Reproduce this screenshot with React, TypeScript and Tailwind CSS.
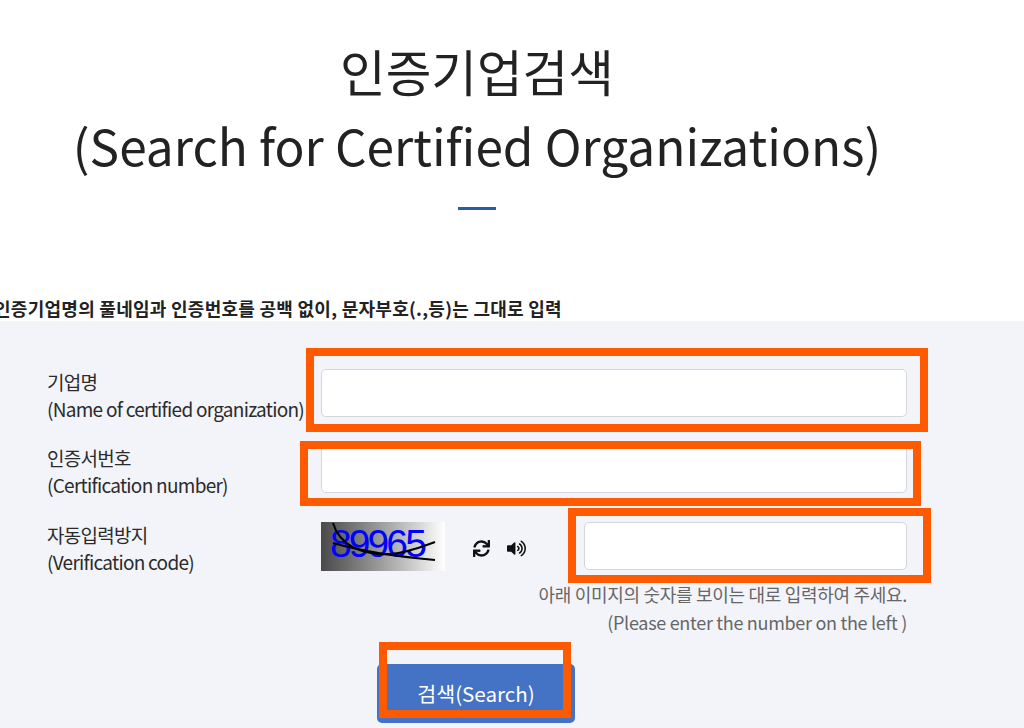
import {FaSync, FaVolumeUp} from "react-icons/fa";

const font = {fontFamily: '"Noto Sans CJK KR", "Noto Sans", sans-serif'};

function Highlight({className}: {className: string}) {
  return <div className={`absolute border-[8px] border-[#ff5a00] pointer-events-none ${className}`}/>;
}

function Label({ko, en}: {ko: string; en: string}) {
  return (
    <div className="-mt-[1px] w-[274px] shrink-0 text-[19px] leading-[27px] text-[#2b2b2b] tracking-[-0.72px]">
      <div>{ko}</div>
      <div className="whitespace-nowrap">{en}</div>
    </div>
  );
}

function Captcha() {
  return (
    <div className="relative h-[49px] w-[124px] overflow-hidden bg-gradient-to-r from-[#4a4a4a] to-white">
      <span className="absolute left-[9px] top-[-6px] text-[39px] leading-[56px] text-[#0000ff] tracking-[-2.9px]" style={{fontFamily: '"Liberation Sans", sans-serif'}}>89965</span>
      <svg className="absolute inset-0" width="124" height="49" viewBox="0 0 124 49" fill="none" stroke="#000" strokeWidth="2">
        <path d="M12 1 C18 22 40 34 70 32 C85 31 100 25 114 20"/>
        <path d="M12 21 C40 29 80 35 114 38"/>
      </svg>
    </div>
  );
}

export default function App() {
  return (
    <div style={font} className="relative h-[728px] w-[1024px] overflow-hidden bg-white">
      <div className="w-[954px] pt-[33px] text-center text-[49.6px] leading-[75px] text-[#222]">
        <div>인증기업검색</div>
        <div className="-mt-[1px] whitespace-nowrap">(Search for Certified Organizations)</div>
      </div>
      <div className="ml-[458px] mt-[25px] h-[3px] w-[38px] bg-[#2a5caa]"/>

      <div className="-ml-[6px] mt-[86px] h-[25px] whitespace-nowrap text-[18px] font-bold leading-[24px] text-[#222] tracking-[0.27px]">
        인증기업명의 풀네임과 인증번호를 공백 없이, 문자부호(.,등)는 그대로 입력
      </div>

      <div className="h-[407px] bg-[#f3f4f9] pl-[47px] pt-[48px]">
        <div className="flex h-[76px] items-start">
          <Label ko="기업명" en="(Name of certified organization)"/>
          <input className="h-[48px] w-[586px] rounded-[5px] border border-[#d4d6da] bg-white"/>
        </div>
        <div className="flex h-[77px] items-start">
          <Label ko="인증서번호" en="(Certification number)"/>
          <input className="h-[48px] w-[586px] rounded-[5px] border border-[#d4d6da] bg-white"/>
        </div>
        <div className="flex h-[48px] items-start">
          <Label ko="자동입력방지" en="(Verification code)"/>
          <Captcha/>
          <div className="ml-[28px] mt-[17px] flex items-center gap-[17px] text-[#111]">
            <FaSync className="h-[17px] w-[17px]"/>
            <FaVolumeUp className="h-[19px] w-[19px]"/>
          </div>
          <input className="ml-[58px] h-[48px] w-[323px] rounded-[5px] border border-[#d4d6da] bg-white"/>
        </div>
        <div className="mt-[10px] w-[860px] text-right text-[18px] leading-[28px] text-[#666] tracking-[-0.3px]">
          <div>아래 이미지의 숫자를 보이는 대로 입력하여 주세요.</div>
          <div>(Please enter the number on the left )</div>
        </div>
        <button className="ml-[330px] mt-[28px] h-[59px] w-[198px] rounded-[5px] bg-[#4472c4] pb-[1px] text-[20.6px] text-white">
          검색(Search)
        </button>
      </div>

      <Highlight className="left-[306px] top-[348px] h-[84px] w-[622px]"/>
      <Highlight className="left-[300px] top-[441px] h-[65px] w-[621px]"/>
      <Highlight className="left-[568px] top-[508px] h-[75px] w-[363px]"/>
      <Highlight className="left-[379px] top-[642px] h-[76px] w-[192px]"/>
    </div>
  );
}
